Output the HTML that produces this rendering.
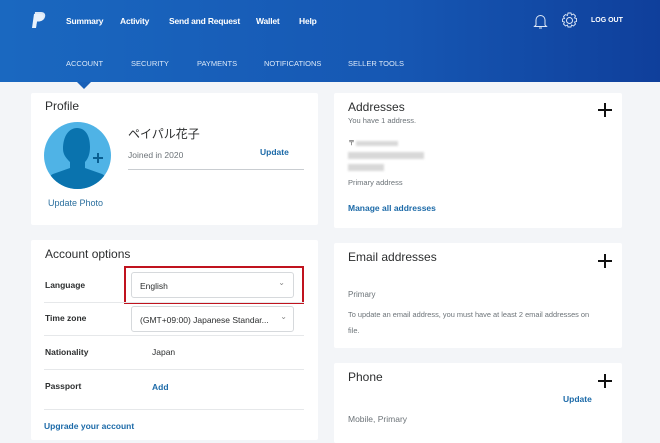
<!DOCTYPE html>
<html><head><meta charset="utf-8"><style>
*{margin:0;padding:0;box-sizing:border-box}
body{width:660px;height:437px;overflow:hidden;background:#f3f5f8;font-family:"Liberation Sans","Noto Sans CJK JP",sans-serif;position:relative;color:#2c2e2f}
.hdr{position:absolute;left:0;top:0;width:660px;height:82px;background:linear-gradient(90deg,#1a68c0 0%,#1657b3 60%,#0f3f9b 100%)}
.t{position:absolute;white-space:nowrap}
.nav{color:#fff;font-size:8.5px;font-weight:bold;top:16px;letter-spacing:-.2px}
.sub{color:#dbe8f8;font-size:7.5px;top:59px}
.card{position:absolute;background:#fff;border-radius:2px}
.h{font-size:12px;color:#2c2e2f}
.lbl{font-size:8.5px;font-weight:bold;color:#2c2e2f}
.lnk{font-size:8.5px;font-weight:bold;color:#1c6aa8}
.gray{font-size:8px;color:#6c7378}
.sep{position:absolute;height:1px;background:#e6e8ea}
.plus{position:absolute;width:14px;height:14px}
.plus:before,.plus:after{content:"";position:absolute;background:#111}
.plus:before{left:6px;top:0;width:2px;height:14px}
.plus:after{left:0;top:6px;width:14px;height:2px}
.sel{position:absolute;border:1px solid #d6d9dc;border-radius:3px;background:#fff;font-size:8.5px;color:#2c2e2f;padding:8px 0 0 8px}
.blur{position:absolute;background:#d8d8d8;filter:blur(1px)}
</style></head><body>
<div class="hdr"></div>
<svg class="t" style="left:32px;top:12px" width="14" height="17" viewBox="0 0 14 17"><path d="M3 0h6c3 0 5 2 4 5c-1 3-3 4-6 4H5l-1 6H1z" fill="#fff" opacity=".85"/><path d="M2 2h6c3 0 4 1.5 3.5 4c-.5 2.5-2.5 3.5-5 3.5H5L4 16H0z" fill="#e8f1fb"/></svg>
<div class="t nav" style="left:66px">Summary</div>
<div class="t nav" style="left:120px">Activity</div>
<div class="t nav" style="left:169px">Send and Request</div>
<div class="t nav" style="left:256px">Wallet</div>
<div class="t nav" style="left:299px">Help</div>
<svg class="t" style="left:533px;top:12px" width="15" height="18" viewBox="0 0 15 18"><path d="M3 13V8a4.5 4.5 0 0 1 9 0v5l1.5 1.5h-12z M6 16h3" fill="none" stroke="#dfe9f7" stroke-width="1"/></svg>
<svg class="t" style="left:561px;top:12px" width="17" height="17" viewBox="0 0 17 17"><circle cx="8.5" cy="8.5" r="3" fill="none" stroke="#dfe9f7"/><path d="M7 1h3l.5 2 2-1 2 2-1 2 2 .5v3l-2 .5 1 2-2 2-2-1-.5 2H7l-.5-2-2 1-2-2 1-2-2-.5V7l2-.5-1-2 2-2 2 1z" fill="none" stroke="#dfe9f7" stroke-width=".9"/></svg>
<div class="t" style="left:591px;top:17px;color:#fff;font-size:7px;font-weight:bold">LOG OUT</div>
<div class="t sub" style="left:66px">ACCOUNT</div>
<div class="t sub" style="left:131px">SECURITY</div>
<div class="t sub" style="left:197px">PAYMENTS</div>
<div class="t sub" style="left:264px">NOTIFICATIONS</div>
<div class="t sub" style="left:348px">SELLER TOOLS</div>
<div class="t" style="left:77px;top:82px;width:0;height:0;border-left:7px solid transparent;border-right:7px solid transparent;border-top:7px solid #1860b8"></div>

<div class="card" style="left:31px;top:93px;width:287px;height:132px"></div>
<div class="t h" style="left:45px;top:99px">Profile</div>
<svg class="t" style="left:44px;top:122px" width="67" height="67" viewBox="0 0 67 67"><defs><clipPath id="c"><circle cx="33.5" cy="33.5" r="33.5"/></clipPath></defs><circle cx="33.5" cy="33.5" r="33.5" fill="#4fb3e6"/><g clip-path="url(#c)" fill="#0a73ae"><path d="M19 27c0-13 6-21 14-21s13 7 13 19c0 7-2 12-5 15v6l17 6c4 2 7 6 7 15H2c0-9 3-13 7-15l17-6v-6c-3-3-7-7-7-13z"/></g><path d="M49 36h10M54 31v10" stroke="#0a5f92" stroke-width="2"/></svg>
<div class="t" style="left:48px;top:198px;color:#2b6f9e;font-size:9px">Update Photo</div>
<div class="t" style="left:128px;top:125px;font-size:12px;font-family:'Noto Sans CJK JP',sans-serif">ペイパル花子</div>
<div class="t gray" style="left:128px;top:150px;font-size:8.5px">Joined in 2020</div>
<div class="t lnk" style="left:260px;top:147px">Update</div>
<div class="sep" style="left:128px;top:169px;width:176px;background:#c9cdd1"></div>

<div class="card" style="left:31px;top:240px;width:287px;height:200px"></div>
<div class="t h" style="left:45px;top:247px">Account options</div>
<div class="t lbl" style="left:45px;top:280px">Language</div>
<div class="sel" style="left:131px;top:272px;width:163px;height:26px">English<span style="position:absolute;right:8px;top:5px;color:#888;font-size:8px">&#8964;</span></div>
<div class="t" style="left:124px;top:266px;width:180px;height:38px;border:2px solid #c0131e"></div>
<div class="sep" style="left:44px;top:302px;width:260px"></div>
<div class="t lbl" style="left:45px;top:313px">Time zone</div>
<div class="sel" style="left:131px;top:306px;width:163px;height:26px">(GMT+09:00) Japanese Standar...<span style="position:absolute;right:6px;top:5px;color:#888;font-size:8px">&#8964;</span></div>
<div class="sep" style="left:44px;top:335px;width:260px"></div>
<div class="t lbl" style="left:45px;top:347px">Nationality</div>
<div class="t" style="left:152px;top:347px;font-size:8.5px">Japan</div>
<div class="sep" style="left:44px;top:369px;width:260px"></div>
<div class="t lbl" style="left:45px;top:381px">Passport</div>
<div class="t lnk" style="left:152px;top:382px">Add</div>
<div class="sep" style="left:44px;top:409px;width:260px"></div>
<div class="t lnk" style="left:44px;top:421px">Upgrade your account</div>

<div class="card" style="left:334px;top:93px;width:288px;height:135px"></div>
<div class="t h" style="left:348px;top:100px">Addresses</div>
<div class="t gray" style="left:348px;top:116px;font-size:7.5px">You have 1 address.</div>
<div class="plus" style="left:598px;top:103px"></div>
<div class="t" style="left:348px;top:138px;font-size:7px;color:#555">〒</div>
<div class="blur" style="left:356px;top:141px;width:42px;height:5px"></div>
<div class="blur" style="left:348px;top:152px;width:76px;height:7px"></div>
<div class="blur" style="left:348px;top:164px;width:36px;height:7px"></div>
<div class="t gray" style="left:348px;top:178px;font-size:7.5px">Primary address</div>
<div class="t lnk" style="left:348px;top:203px">Manage all addresses</div>

<div class="card" style="left:334px;top:243px;width:288px;height:105px"></div>
<div class="t h" style="left:348px;top:250px">Email addresses</div>
<div class="plus" style="left:598px;top:254px"></div>
<div class="t gray" style="left:348px;top:290px">Primary</div>
<div class="t gray" style="left:348px;top:310px;font-size:7.4px">To update an email address, you must have at least 2 email addresses on</div>
<div class="t gray" style="left:348px;top:326px;font-size:7.4px">file.</div>

<div class="card" style="left:334px;top:363px;width:288px;height:80px"></div>
<div class="t h" style="left:348px;top:370px">Phone</div>
<div class="plus" style="left:598px;top:374px"></div>
<div class="t lnk" style="left:563px;top:394px">Update</div>
<div class="t gray" style="left:348px;top:414px;font-size:8.5px">Mobile, Primary</div>
</body></html>
